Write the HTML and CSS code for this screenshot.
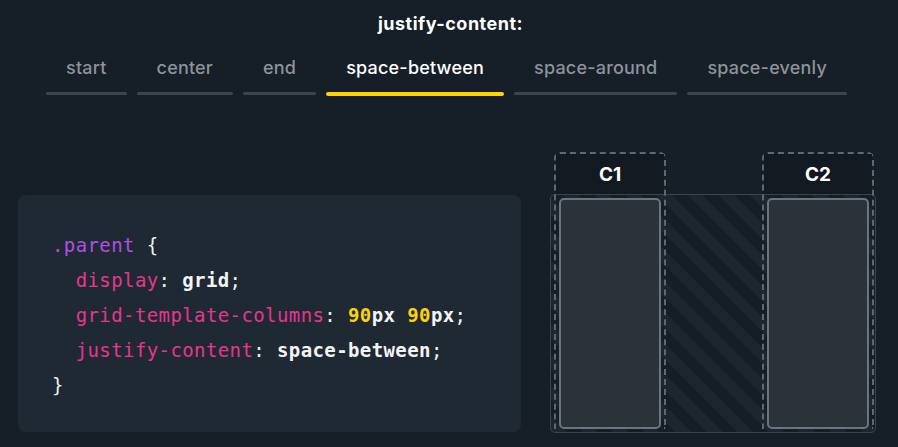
FILE: index.html
```html
<!DOCTYPE html>
<html lang="en">
<head>
<meta charset="utf-8">
<title>justify-content</title>
<link rel="stylesheet" href="styles.css">
</head>
<body>
<header class="top">
  <h1 class="title">justify-content:</h1>
  <nav class="tabs">
    <span class="tab">start</span>
    <span class="tab">center</span>
    <span class="tab">end</span>
    <span class="tab active">space-between</span>
    <span class="tab">space-around</span>
    <span class="tab">space-evenly</span>
  </nav>
</header>
<main class="stage">
  <pre class="code"><span class="sel">.parent</span> <span class="pun">{</span>
  <span class="prop">display</span><span class="pun">:</span> <span class="val">grid</span><span class="pun">;</span>
  <span class="prop">grid-template-columns</span><span class="pun">:</span> <span class="num">90</span><span class="val">px</span> <span class="num">90</span><span class="val">px</span><span class="pun">;</span>
  <span class="prop">justify-content</span><span class="pun">:</span> <span class="val">space-between</span><span class="pun">;</span>
<span class="pun">}</span></pre>
  <div class="diagram">
    <div class="col">
      <div class="col-head">C1</div>
      <div class="item"></div>
    </div>
    <div class="col">
      <div class="col-head">C2</div>
      <div class="item"></div>
    </div>
  </div>
</main>
</body>
</html>
```
FILE: styles.css
```css
* { box-sizing: border-box; }
html, body { margin: 0; padding: 0; }
body {
  background: #161e27;
  width: 898px;
  height: 447px;
  overflow: hidden;
  font-family: Inter, "Noto Sans", sans-serif;
  color: #f4f5f6;
}
.top {
  padding-top: 13px;
  display: flex;
  flex-direction: column;
  align-items: center;
}
.title {
  margin: 0;
  font-size: 18px;
  line-height: 22px;
  font-weight: 700;
  letter-spacing: 0.5px;
  color: #ffffff;
  padding-left: 3px;
}
.tabs {
  margin-top: 22px;
  display: flex;
  gap: 10px;
  margin-right: 5px;
}
.tab {
  position: relative;
  padding: 0 20px 16px;
  font-size: 18px;
  line-height: 22px;
  font-weight: 500;
  letter-spacing: 0.2px;
  color: #8d939a;
}
.tab::after {
  content: "";
  position: absolute;
  left: 0;
  right: 0;
  bottom: 0;
  height: 3px;
  border-radius: 2px;
  background: #3d444d;
}
.tab.active { color: #ffffff; }
.tab.active::after { background: #ffd400; height: 4px; bottom: -1px; }

.stage {
  margin-top: 57px;
  display: flex;
  align-items: flex-end;
  padding-left: 18px;
  gap: 29px;
}
.code {
  margin: 0 0 1px;
  width: 503px;
  height: 237px;
  background: #1e2934;
  border-radius: 8px;
  padding: 33px 0 0 34px;
  font-family: "DejaVu Sans Mono", "Liberation Mono", monospace;
  font-size: 19px;
  line-height: 35px;
  letter-spacing: 0.4px;
  color: #f2f2f2;
}
.sel { color: #b24fe2; }
.prop { color: #e8358f; }
.num { color: #ffd10a; font-weight: 700; }
.val { color: #f4f4f4; font-weight: 700; }
.pun { color: #f0f0f0; }

.diagram {
  position: relative;
  width: 326px;
  height: 281px;
  display: grid;
  grid-template-columns: 112px 112px;
  justify-content: space-between;
  padding: 0 2px 0 4px;
}
.diagram::before {
  content: "";
  position: absolute;
  top: 42px;
  left: 0;
  right: 0;
  bottom: 0;
  border: 1px solid #3a444f;
  border-radius: 5px;
  background: repeating-linear-gradient(45deg, #1d2630 0 11px, #151d26 11px 22px);
}
.col {
  position: relative;
  display: flex;
  flex-direction: column;
  border: 2px dashed #5d6874;
  border-bottom: none;
  border-radius: 6px 6px 0 0;
  height: 277px;
}
.col-head {
  height: 40px;
  flex: none;
  display: flex;
  align-items: center;
  justify-content: center;
  background: #121921;
  font-family: Inter, "Noto Sans", sans-serif;
  font-weight: 700;
  font-size: 19px;
  letter-spacing: 0;
  color: #ffffff;
}
.item {
  flex: 1;
  margin: 4px 3px 0;
  background: #2b323a;
  border: 2px solid #6b7580;
  border-radius: 5px;
}
```
